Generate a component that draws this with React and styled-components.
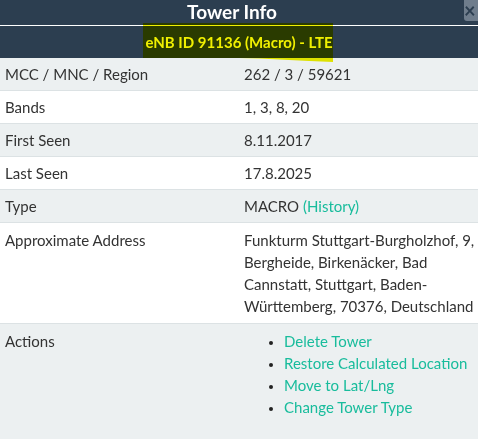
import React from 'react';
import styled, { createGlobalStyle } from 'styled-components';

const GlobalStyle = createGlobalStyle`
  html, body {
    margin: 0;
    padding: 0;
    background: #ecf0f1;
    overflow: hidden;
  }
  body {
    font-family: Lato, "Open Sans", "Liberation Sans", sans-serif;
    font-size: 15px;
    color: #333;
  }
`;

const Panel = styled.div`
  width: 478px;
  min-height: 439px;
  background: #ecf0f1;
`;

const Head = styled.div`
  position: relative;
  background: #2c3e50;
  color: #fff;
`;

const TitleBar = styled.div`
  display: flex;
  height: 25px;
  border-bottom: 1px solid #fff;
`;

const Title = styled.div`
  flex: 1;
  text-align: center;
  font-weight: 700;
  font-size: 19px;
  line-height: 24px;
`;

const Close = styled.div`
  width: 24px;
  height: 21px;
  margin-right: -10px;
  background: #6f7d8c;
  border-bottom-left-radius: 3px;
  color: #2c3e50;
  font-weight: 700;
  font-size: 20px;
  line-height: 20px;
  box-sizing: border-box;
`;

const SubTitle = styled.div`
  height: 32px;
  line-height: 33px;
  text-align: center;
  font-weight: 700;
  font-size: 15px;
  color: #fff;
`;

const Marker = styled.div`
  position: absolute;
  left: 143px;
  top: 23px;
  width: 190px;
  height: 35px;
  background: #f0f000;
  mix-blend-mode: multiply;
  pointer-events: none;
`;

const MarkerTail = styled.svg`
  position: absolute;
  left: 239px;
  top: 58px;
  width: 94px;
  height: 4px;
  mix-blend-mode: multiply;
  z-index: 2;
`;

const Table = styled.div`
  display: flex;
  flex-direction: column;
`;

const Row = styled.div`
  display: grid;
  grid-template-columns: 239px 1fr;
  border-top: 1px solid #dce2e4;
  background: ${p => (p.$striped ? '#ecf0f1' : '#fff')};
  padding-bottom: ${p => (p.$tall ? '30px' : '0')};

  &:first-child {
    border-top: none;
  }
`;

const Cell = styled.div`
  padding: ${p => (p.$roomy ? '6px 0 6px 5px' : '5px 0 5px 5px')};
  line-height: 22px;
`;

const Link = styled.a`
  color: #18bc9c;
  text-decoration: none;
`;

const ActionList = styled.ul`
  margin: 0;
  padding-left: 40px;
  list-style: disc;

  li::marker {
    color: #222;
    font-size: 13px;
  }
`;

const actions = ['Delete Tower', 'Restore Calculated Location', 'Move to Lat/Lng', 'Change Tower Type'];

function App() {
  const rows = [
    { label: 'MCC / MNC / Region', value: '262 / 3 / 59621' },
    { label: 'Bands', value: '1, 3, 8, 20' },
    { label: 'First Seen', value: '8.11.2017' },
    { label: 'Last Seen', value: '17.8.2025' },
    { label: 'Type', value: <>MACRO <Link href="#">(History)</Link></> },
    {
      label: 'Approximate Address',
      value: 'Funkturm Stuttgart-Burgholzhof, 9, Bergheide, Birkenäcker, Bad Cannstatt, Stuttgart, Baden-Württemberg, 70376, Deutschland',
      roomy: true,
    },
  ];

  return (
    <Panel>
      <GlobalStyle />
      <Head>
        <TitleBar>
          <Title>Tower Info</Title>
          <Close>×</Close>
        </TitleBar>
        <SubTitle>eNB ID 91136 (Macro) - LTE</SubTitle>
        <Marker />
        <MarkerTail viewBox="0 0 94 4" preserveAspectRatio="none">
          <polygon points="0,0 94,0 94,4 70,3 20,0.6" fill="#f0f000" />
        </MarkerTail>
      </Head>
      <Table>
        {rows.map((r, i) => (
          <Row key={r.label} $striped={i % 2 === 0}>
            <Cell $roomy={r.roomy}>{r.label}</Cell>
            <Cell $roomy={r.roomy}>{r.value}</Cell>
          </Row>
        ))}
        <Row $striped $tall>
          <Cell $roomy>Actions</Cell>
          <Cell $roomy>
            <ActionList>
              {actions.map(a => (
                <li key={a}><Link href="#">{a}</Link></li>
              ))}
            </ActionList>
          </Cell>
        </Row>
      </Table>
    </Panel>
  );
}

export default App;
